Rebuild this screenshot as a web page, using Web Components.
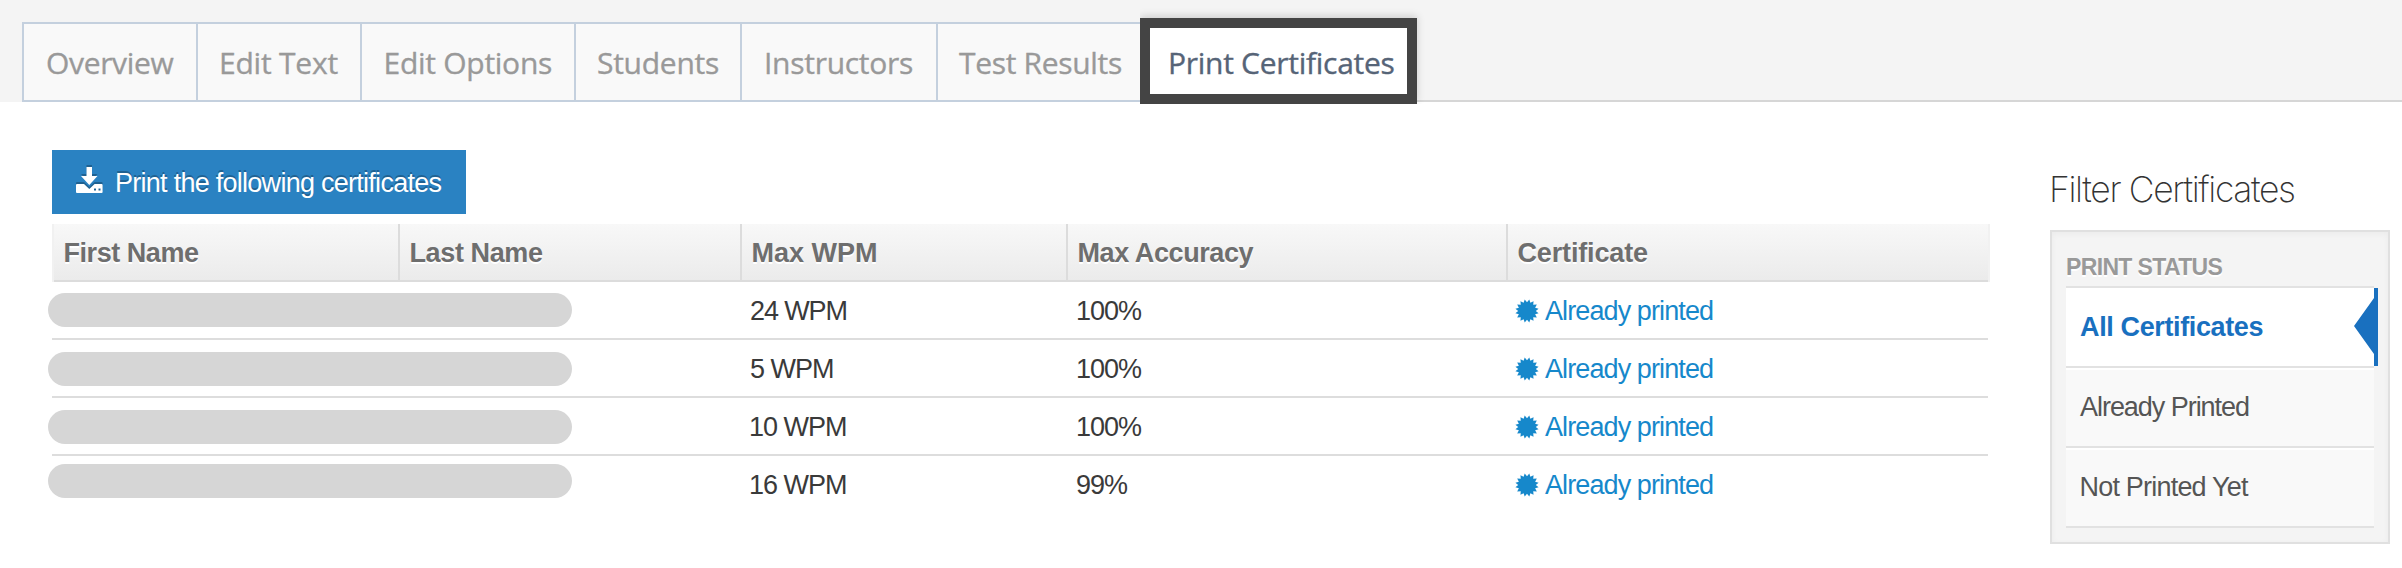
<!DOCTYPE html>
<html lang="en"><head><meta charset="utf-8"><title>Print Certificates</title>
<style>html,body{margin:0;background:#fff}body{width:2402px;height:568px;overflow:hidden;font-family:"Liberation Sans",Arial,sans-serif}</style></head>
<body><certificates-page></certificates-page>
<script>
const define=(name,html,setup)=>customElements.define(name,class extends HTMLElement{
  connectedCallback(){
    if(this.shadowRoot)return;
    const t=document.createElement('template');t.innerHTML=html;
    this.attachShadow({mode:'open'}).append(t.content.cloneNode(true));
    if(setup)setup.call(this,this.shadowRoot);
  }
});

/* A label tracked so that its glyphs span exactly the width in `w`. */
const ctx=document.createElement('canvas').getContext('2d');
define('fit-text',`<style>:host{display:block;white-space:nowrap;font-kerning:normal;font-variant-ligatures:none}span{display:inline-block}</style><span><slot></slot></span>`,function(root){
  const s=root.querySelector('span'),cs=getComputedStyle(this),txt=this.textContent;
  ctx.font=`${cs.fontWeight} ${cs.fontSize} ${cs.fontFamily}`;
  const m=ctx.measureText(txt),ink=m.actualBoundingBoxRight+m.actualBoundingBoxLeft;
  s.style.letterSpacing=((+this.getAttribute('w')-ink)/(txt.length-1)).toFixed(3)+'px';
  s.style.marginLeft=m.actualBoundingBoxLeft.toFixed(2)+'px';
});

define('tab-item',`<style>
:host{display:block;box-sizing:border-box;height:76px;border-right:2px solid #c4d0de;background:#f9f9f9;color:#999;font:30px/78px "Open Sans",sans-serif;-webkit-text-stroke:.35px}
:host([active]){height:86px;margin:-6px 0 -4px;border:10px solid #444;background:#fff;color:#566477;line-height:70px;box-shadow:0 -2px 8px rgba(0,0,0,.16);clip-path:inset(-10px -10px 0 0)}
</style><slot></slot>`);

define('tab-bar',`<style>
:host{display:flex;box-sizing:border-box;height:102px;padding:22px 0 0 22px;background:#f4f4f4}
.tabs{display:flex;box-sizing:border-box;width:1118px;height:80px;border:solid #c4d0de;border-width:2px 0 2px 2px}
.active{padding-top:2px;z-index:1}
.rest{flex:1;box-sizing:border-box;border-bottom:2px solid #d6d6d6}
</style>
<div class="tabs">
<tab-item style="width:174px;padding-left:23px"><fit-text w="126.5">Overview</fit-text></tab-item>
<tab-item style="width:164px;padding-left:23px"><fit-text w="116.5">Edit Text</fit-text></tab-item>
<tab-item style="width:214px;padding-left:23.5px"><fit-text w="165.5">Edit Options</fit-text></tab-item>
<tab-item style="width:166px;padding-left:22px"><fit-text w="120">Students</fit-text></tab-item>
<tab-item style="width:196px;padding-left:24px"><fit-text w="146">Instructors</fit-text></tab-item>
<tab-item style="width:202px;padding-left:21px;border:0"><fit-text w="162">Test Results</fit-text></tab-item>
</div>
<div class="active"><tab-item active style="width:277px;padding-left:20px"><fit-text w="223.500">Print Certificates</fit-text></tab-item></div>
<div class="rest"></div>`);

define('print-button',`<style>
:host{display:flex;box-sizing:border-box;width:414px;height:64px;padding-left:24px;background:#2a82c2;color:#fff;font-size:27px;line-height:66px;text-shadow:0 -2px 0 rgba(0,0,0,.25)}
svg{display:block;width:27px;height:26px;margin:17px 14px 0 0;overflow:visible;filter:drop-shadow(0 -2px 0 rgba(0,0,0,.25))}
</style><svg viewBox="0 0 27 26"><path fill="#fff" fill-rule="evenodd" d="M10.5 0h5.5v9h5.500L13.300 18 5 9h5.500zM1 17h7l5.300 5 5.300-5h7a1 1 0 0 1 1 1v7a1 1 0 0 1-1 1h-24.600a1 1 0 0 1-1-1v-7a1 1 0 0 1 1-1zM18 21.500v2h2v-2zM22.500 21.500v2h2v-2z"/></svg><fit-text w="324.500">Print the following certificates</fit-text>`);

define('print-status',`<style>
:host{display:flex;color:#1688cb}
svg{display:block;width:22px;height:22px;margin:18px 7px 0 1px;overflow:visible}
</style><svg viewBox="-11 -11 22 22"><path fill="#1688cb"/></svg><fit-text w="168">Already printed</fit-text>`,function(r){
  let d='';
  for(let i=0;i<32;i++){const a=(i+1)*Math.PI/16,q=i%2?8.8:11.8;d+=(i?'L':'M')+(q*Math.cos(a)).toFixed(2)+' '+(q*Math.sin(a)).toFixed(2)}
  r.querySelector('path').setAttribute('d',d+'Z');
});

define('certificate-row',`<style>
:host{display:grid;grid-template-columns:691px 327px 437px 1fr;box-sizing:border-box;height:58px;width:1936px;padding-left:8px;border-bottom:2px solid #ddd;font-size:27px;line-height:59px;color:#3a3a3a}
:host([last]){border:0}
.name{width:524px;height:34px;border-radius:17px;background:#d6d6d6;margin:var(--pill,12px) 0 0 -12px}
</style><div class="name"></div><slot></slot><print-status></print-status>`);

define('certificate-table',`<style>
:host{display:block;width:1938px}
.head{display:grid;grid-template-columns:346px 342px 326px 440px 1fr;box-sizing:border-box;height:58px;border:solid #f1f1f1;border-width:0 2px;font-weight:bold;font-size:27px;line-height:58px;color:#6e6e6e}
.head div{box-sizing:border-box;height:58px;border-right:2px solid #dcdcdc;border-bottom:2px solid #dcdcdc;background:linear-gradient(#f8f8f8,#ebebeb);text-shadow:0 2px 0 #fff;padding-left:10.500px}
.head div:last-child{border-right:0}
</style><div class="head">
<div><fit-text w="134.500">First Name</fit-text></div><div><fit-text w="132.500">Last Name</fit-text></div><div><fit-text w="123.500">Max WPM</fit-text></div><div><fit-text w="176">Max Accuracy</fit-text></div><div><fit-text w="129.500">Certificate</fit-text></div></div>
<certificate-row style="--pill:11px"><fit-text w="95.500">24 WPM</fit-text><fit-text w="64">100%</fit-text></certificate-row>
<certificate-row><fit-text w="82">5 WPM</fit-text><fit-text w="64">100%</fit-text></certificate-row>
<certificate-row><fit-text w="95">10 WPM</fit-text><fit-text w="64">100%</fit-text></certificate-row>
<certificate-row last style="--pill:8px"><fit-text w="95">16 WPM</fit-text><fit-text w="51" style="margin-left:-1px">99%</fit-text></certificate-row>`);

define('filter-item',`<style>
:host{display:flex;justify-content:space-between;box-sizing:border-box;height:80px;padding-left:14px;border-bottom:2px solid #e2e2e2;background:#f9f9f9;box-shadow:inset 0 2px #fff;color:#555;font-size:27px;line-height:79px}
svg{display:none}
:host([active]){background:#fff;color:#1970bf;font-weight:bold}
:host([active]) svg{display:block;width:24px;height:78px;margin-right:-4px}
</style><slot></slot><svg viewBox="0 0 24 78"><path fill="#1970bf" d="M20 0h4v78h-4V66L0 38 20 10z"/></svg>`);

define('filter-panel',`<style>
:host{display:block;width:340px}
h2{margin:0;padding-left:2px;height:80px;font:200 35.500px/79px Inter,"Liberation Sans",sans-serif;color:#333}
.box{box-sizing:border-box;height:314px;padding:20px 14px 0;border:2px solid #e0e0e0;background:#f4f4f4;box-shadow:inset 0 2px 6px rgba(0,0,0,.04)}
.title{height:34px;border-bottom:2px solid #e2e2e2;padding-left:1px;color:#999;font-weight:bold;font-size:23px;line-height:31px;text-shadow:0 2px 0 #fff}
</style><h2><fit-text w="242">Filter Certificates</fit-text></h2>
<div class="box"><div class="title"><fit-text w="155.500">PRINT STATUS</fit-text></div>
<filter-item active><fit-text w="182.500">All Certificates</fit-text></filter-item>
<filter-item><fit-text w="169">Already Printed</fit-text></filter-item>
<filter-item><fit-text w="168" style="margin-left:1.5px">Not Printed Yet</fit-text></filter-item></div>`);

define('certificates-page',`<style>
:host{display:block;width:2402px;height:568px}
.body{display:flex;padding:48px 0 0 52px}
certificate-table{margin-top:10px}
filter-panel{margin-left:60px}
</style><tab-bar></tab-bar><div class="body"><div><print-button></print-button><certificate-table></certificate-table></div><filter-panel></filter-panel></div>`);
</script></body></html>
